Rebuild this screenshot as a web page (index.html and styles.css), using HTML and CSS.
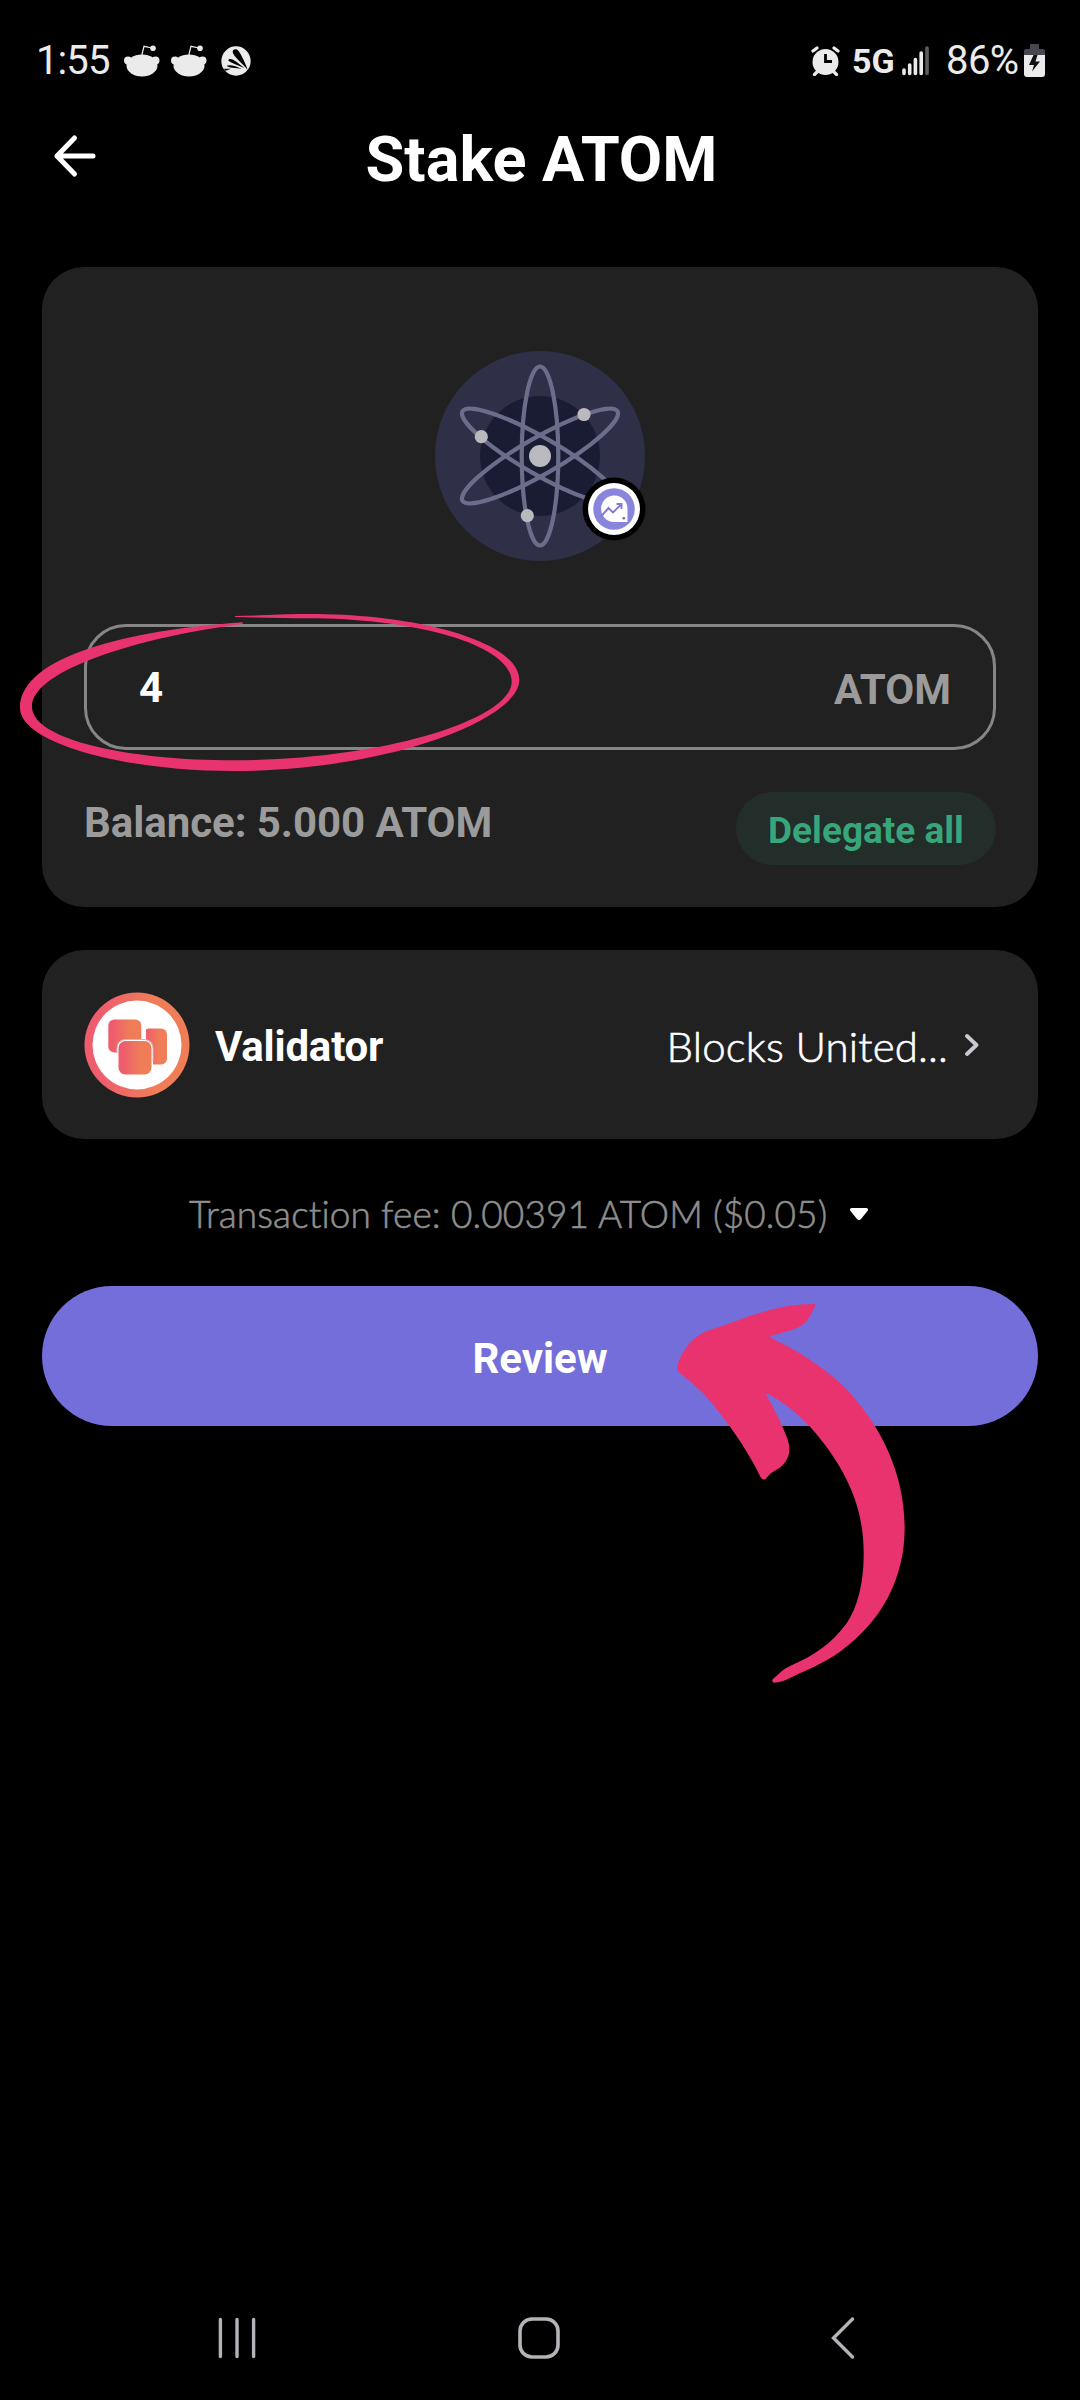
FILE: index.html
```html
<!DOCTYPE html>
<html lang="en">
<head>
<meta charset="utf-8">
<title>Stake ATOM</title>
<link rel="stylesheet" href="styles.css">
</head>
<body>
<div class="screen">
  <div class="status">
    <span class="clock">1:55</span>
    <svg class="reddit" width="36" height="32" viewBox="0 0 36 32" fill="#ebebeb"><ellipse cx="18" cy="20.5" rx="15.5" ry="11"/><circle cx="4" cy="15.5" r="4"/><circle cx="31.5" cy="15.5" r="4"/><circle cx="29" cy="3.2" r="2.8"/><path d="M17.6 11L20 1.3L28 3" fill="none" stroke="#ebebeb" stroke-width="1.2"/></svg>
    <svg class="reddit second" width="36" height="32" viewBox="0 0 36 32" fill="#ebebeb"><ellipse cx="18" cy="20.5" rx="15.5" ry="11"/><circle cx="4" cy="15.5" r="4"/><circle cx="31.5" cy="15.5" r="4"/><circle cx="29" cy="3.2" r="2.8"/><path d="M17.6 11L20 1.3L28 3" fill="none" stroke="#ebebeb" stroke-width="1.2"/></svg>
    <svg class="shell" width="30" height="30" viewBox="0 0 90 90"><circle cx="45" cy="45" r="44" fill="#ebebeb"/><path d="M80 71C60 50 40 32 36 22C32 10 44 6 52 14C60 24 72 48 80 71ZM70 66C52 58 26 50 22 43C24 35 36 40 46 47ZM62 68C44 66 22 65 17 60C24 54 44 60 62 68ZM8 68L30 68L14 74Z" fill="#000"/></svg>
    <span class="grow"></span>
    <svg class="alarm" width="30" height="30" viewBox="0 0 30 30"><circle cx="14.5" cy="16" r="13" fill="#ebebeb"/><path d="M2 5L6 2M27 5L23 2M6 26L3.500 28.500M23 26L25.500 28.500" stroke="#ebebeb" stroke-width="3.200" stroke-linecap="round"/><path d="M14.500 8V15.500H21" fill="none" stroke="#000" stroke-width="2.800"/></svg>
    <span class="network">5G</span>
    <svg class="signal" width="28" height="30" viewBox="0 0 28 30" stroke="#ebebeb" stroke-width="3.600" stroke-linecap="round"><path d="M2 24V27.500M7.700 19V27.500M13.400 13.500V27.500M19.200 7V27.500"/><path d="M25 2V27.500" stroke="#5b5b5f"/></svg>
    <span class="percent">86%</span>
    <svg class="battery" width="21" height="33" viewBox="0 0 21 33"><path d="M6 0H15V5H19Q21 5 21 7V12H0V7Q0 5 2 5H6Z" fill="#48464f"/><path d="M0 11H21V30Q21 33 18 33H3Q0 33 0 30Z" fill="#ebebeb"/><path d="M9.500 11L5 21H10L8 27.500L16 17.500H11.500L13.500 11Z" fill="#111"/></svg>
  </div>

  <div class="header">
    <svg class="back" width="44" height="44" viewBox="0 0 44 44" fill="none" stroke="#fff" stroke-width="5" stroke-linecap="round" stroke-linejoin="round"><path d="M40 22H4M21.500 4L4 22L21.500 40"/></svg>
    <h1 class="title">Stake ATOM</h1>
  </div>

  <div class="card stake">
    <div class="logo">
      <svg width="210" height="210" viewBox="-105 -105 210 210">
        <circle r="105" fill="#2f3047"/>
        <circle r="60" fill="#1a1c34"/>
        <g fill="none" stroke="#6c6d8a" stroke-width="4.200">
          <ellipse rx="18.300" ry="89.500"/>
          <ellipse rx="18.300" ry="89.500" transform="rotate(60)"/>
          <ellipse rx="18.300" ry="89.500" transform="rotate(-60)"/>
        </g>
        <g fill="#bab9bd"><circle r="11"/><circle cx="44" cy="-41.500" r="6.600"/><circle cx="-58.700" cy="-19.300" r="6.600"/><circle cx="-12.700" cy="59.700" r="6.600"/></g>
      </svg>
      <svg class="badge" width="64" height="64" viewBox="-32 -32 64 64">
        <circle r="31.500" fill="#000"/><circle r="26" fill="#fff"/><circle r="20.800" fill="#8a85dc"/>
        <path d="M13.500 13H0A13.200 13.200 0 1 1 13.500 0Z" fill="#fff"/>
        <path d="M-13 7.500L-5.500 -1L-1 3.500L7 -4.500M2.500 -5H7.500V0" fill="none" stroke="#7f7ad6" stroke-width="1.900"/>
        <circle cx="9.800" cy="9.300" r="1.300" fill="#6d6a8e"/>
      </svg>
    </div>
    <div class="field"><span class="amount">4</span><span class="unit">ATOM</span></div>
    <div class="balance-row"><span class="balance">Balance: 5.000 ATOM</span><span class="all"><span class="all-text">Delegate all</span></span></div>
  </div>

  <div class="card validator">
    <svg class="avatar" width="106" height="106" viewBox="-53 -53 106 106">
      <defs><linearGradient id="coral" x1="0" x2="1" y1="0" y2="0"><stop offset="0.150" stop-color="#ee5d6d"/><stop offset="0.650" stop-color="#ef7d58"/></linearGradient></defs>
      <circle r="52.500" fill="url(#coral)"/><circle r="44.500" fill="#fff"/>
      <rect x="6" y="-16.500" width="24" height="36" rx="6" fill="url(#coral)"/>
      <path d="M5.500 -20V-5H9V-20Z" fill="#fff"/>
      <rect x="-28.700" y="-25.500" width="33" height="33" rx="6" fill="url(#coral)"/>
      <rect x="-20" y="-5.500" width="36" height="36.500" rx="9" fill="#fff"/>
      <path d="M-20 8V3Q-20 -5.500 -11 -5.500H7Q16 -5.500 16 3V17" fill="none" stroke="#d8b6b8" stroke-width="1"/>
      <rect x="-18.500" y="-4" width="33" height="33.500" rx="7" fill="url(#coral)"/>
    </svg>
    <span class="label">Validator</span>
    <span class="name">Blocks United...</span>
    <svg class="chevron" width="14" height="24" viewBox="0 0 14 24" fill="none" stroke="#cac9cf" stroke-width="3.800" stroke-linecap="round" stroke-linejoin="round"><path d="M2 3L11.500 12L2 21"/></svg>
  </div>

  <div class="fee"><span class="fee-text">Transaction fee: 0.00391 ATOM ($0.05)</span><svg class="caret" width="20" height="14" viewBox="0 0 20 14"><path d="M2.500 1H17.500Q20 1.500 18.500 4L12 12Q10 14 8 12L1.500 4Q0 1.500 2.500 1Z" fill="#fff"/></svg></div>

  <div class="review"><span class="review-text">Review</span></div>

  <div class="nav">
    <svg width="38" height="44" viewBox="0 0 38 44" stroke="#b3b3b8" stroke-width="3.400" stroke-linecap="round"><path d="M2.400 3.500V40.500M19 3.500V40.500M35.600 3.500V40.500"/></svg>
    <svg class="home" width="44" height="44" viewBox="0 0 44 44"><rect x="3" y="3" width="38" height="38" rx="12" fill="none" stroke="#b3b3b8" stroke-width="3.600"/></svg>
    <svg width="26" height="44" viewBox="0 0 26 44" fill="none" stroke="#b3b3b8" stroke-width="3.400" stroke-linecap="round"><path d="M22.500 3L3.500 22L22.500 41"/></svg>
  </div>

  <svg class="notes" width="1080" height="2400" viewBox="0 0 1080 2400" fill="#e9336f">
    <path d="M235 616C262 615.500 290 613.500 310 614C420 614 519.300 642 519.300 680C519.300 720 385 771 234 771C120 771 20 742 20 708C20 656 130 630 242.800 622.300L242.400 624C140 637 32 670 32 706.700C32 740 130 760.300 234 760.300C380 760.300 511.700 720 511.700 681.700C511.700 645 415 616.500 296 618.300L235 617Z"/>
    <path transform="translate(640 1270) scale(.33333)" d="M527 102C520 120 512 138 500 152C480 180 440 182 387 200C470 240 550 290 610 348C730 470 794 620 794 775C794 930 720 1060 600 1145C550 1180 500 1200 432 1232C420 1236 408 1238 400 1238Q394 1232 399 1227L425 1204Q435 1195 450 1188C520 1158 575 1122 620 1060C655 1010 672 930 671 850C671 740 640 650 580 560C520 470 460 415 387 373Q375 368 380 376C400 412 420 450 440 500C460 550 440 580 412 598C390 610 388 615 378 626Q370 632 363 624C320 535 260 450 190 370C165 345 140 325 114 305Q109 298 112 285C130 235 160 195 210 180C310 148 400 102 527 102Z"/>
  </svg>
</div>
</body>
</html>
```
FILE: styles.css
```css
* { box-sizing: border-box; }
body { margin: 0; background: #000; color: #fff; font-family: Roboto, sans-serif; }
svg { display: block; flex: none; }
span { white-space: nowrap; }

.screen { position: relative; width: 1080px; height: 2400px; display: flex; flex-direction: column; overflow: hidden; }

.status { height: 121px; display: flex; align-items: center; padding: 0 35px 0 36px; color: #ebebeb; }
.clock, .percent { font-size: 40px; }
.clock { width: 88px; letter-spacing: -0.9px; }
.second { margin-left: 11px; }
.shell { margin-left: 14px; }
.grow { flex: 1; }
.network { width: 42px; margin-left: 11px; font-size: 34px; font-weight: 700; }
.signal { margin-left: 8px; }
.percent { margin-left: 16px; width: 78px; letter-spacing: -0.6px; }

.header { height: 146px; display: flex; padding: 0 51px 0 53px; }
.back { margin-top: 13px; }
.title { flex: 1; margin: 0 43px 0 0; font-size: 63px; line-height: 77px; font-weight: 700; text-align: center; }

.card { width: 996px; margin: 0 auto; border-radius: 42px; background: #212121; }
.stake { height: 640px; padding: 84px 42px 0; }
.logo { position: relative; width: 210px; margin: 0 auto; }
.badge { position: absolute; left: 147px; top: 126px; }
.field { height: 126px; margin-top: 63px; padding: 0 42px 0 52px; display: flex; align-items: center; justify-content: space-between; border: 3px solid #868686; border-radius: 42px; font-size: 42px; font-weight: 700; }
.unit { color: #9b9b9b; padding-top: 4px; }
.balance-row { margin-top: 42px; display: flex; justify-content: space-between; }
.balance { font-size: 42px; font-weight: 700; line-height: 61px; color: #9b9b9b; letter-spacing: -0.05px; }
.all { width: 260px; height: 73px; border-radius: 37px; background: #232d2a; color: #37a67a; font-size: 37px; font-weight: 700; line-height: 77px; text-align: center; }

.validator { height: 189px; margin-top: 43px; padding: 0 59px 0 42px; display: flex; align-items: center; }
.label { flex: 1; margin-left: 25px; padding-top: 4px; font-size: 42px; font-weight: 700; letter-spacing: -0.2px; }
.name, .fee-text { font-family: Lato, sans-serif; font-weight: 300; font-variant-ligatures: none; -webkit-text-stroke: 0.6px currentColor; }
.name { padding-top: 3px; font-size: 42px; letter-spacing: 0.15px; }
.chevron { margin-left: 17px; }

.fee { height: 147px; display: flex; align-items: center; padding: 2px 0 0 189px; color: #8e8e8e; font-size: 37px; }
.fee-text { width: 638px; letter-spacing: 0.1px; }
.caret { margin-left: 22px; }

.review { height: 140px; width: 996px; margin: 0 auto; border-radius: 70px; background: #736eda; font-size: 42px; font-weight: 700; line-height: 145px; text-align: center; }

.nav { height: 124px; margin-top: auto; padding: 0 224px 0 218px; display: flex; align-items: center; justify-content: space-between; }
.home { margin-right: 8px; }
.notes { position: absolute; left: 0; top: 0; pointer-events: none; }
```
